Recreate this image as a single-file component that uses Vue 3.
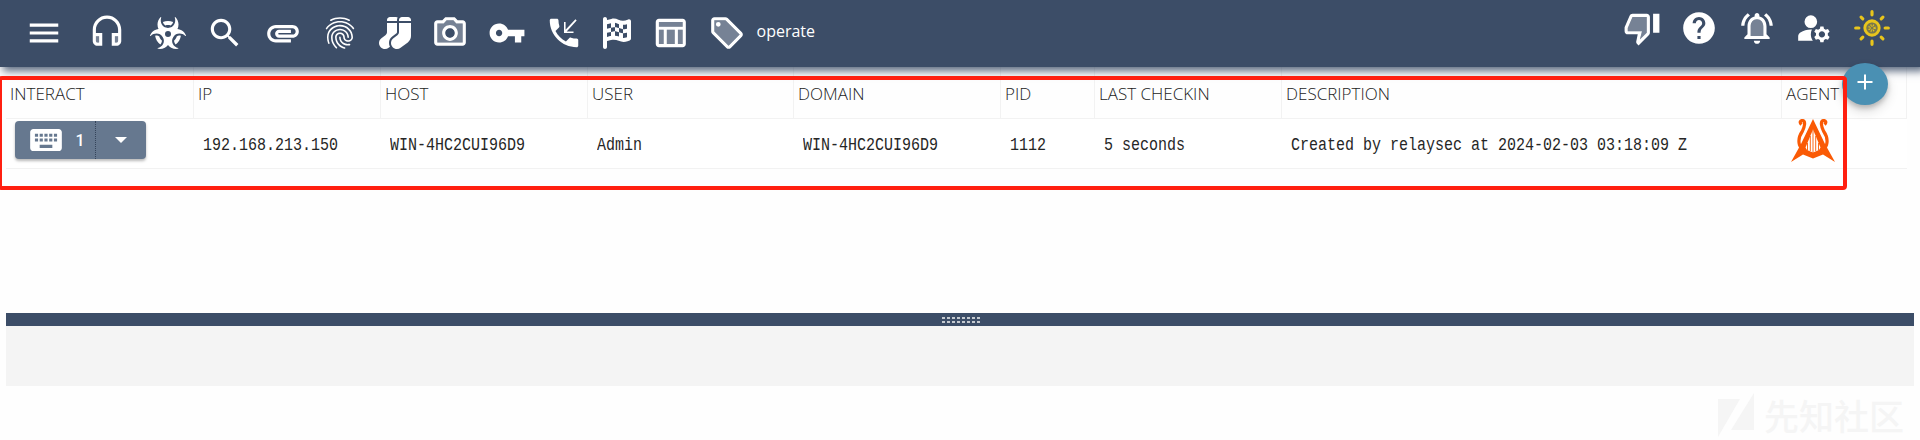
<script setup>
const tools = [
  { name: 'menu', path: 'M3 18h18v-2H3v2zm0-5h18v-2H3v2zm0-7v2h18V6H3z' },
  {
    name: 'headset',
    tone: 'M5 14h2v4H6c-.55 0-1-.45-1-1zm12 0h2v3c0 .55-.45 1-1 1h-1z',
    path: 'M12 1c-4.97 0-9 4.03-9 9v7c0 1.66 1.34 3 3 3h3v-8H5v-2c0-3.87 3.13-7 7-7s7 3.13 7 7v2h-4v8h3c1.66 0 3-1.34 3-3v-7c0-4.97-4.03-9-9-9zM7 14v4H6c-.55 0-1-.45-1-1v-3h2zm12 3c0 .55-.45 1-1 1h-1v-4h2v3z'
  },
  {
    name: 'biohazard',
    box: '-16 -48 608 608',
    path: 'M173.2 0c-1.8 0-3.5 .7-4.8 2C138.5 32.3 120 74 120 120c0 26.2 6 50.9 16.6 73c-22 2.4-43.8 9.1-64.2 20.5C37.9 232.8 13.3 262.4 .4 296c-.7 1.7-.5 3.7 .5 5.2c2.2 3.7 7.4 4.3 10.6 1.3C64.2 254.3 158 245.1 205 324s-8.1 153.1-77.6 173.2c-4.2 1.2-6.3 5.9-4.1 9.6c1 1.6 2.6 2.7 4.5 3c36.5 5.9 75.2 .1 109.7-19.2c20.4-11.4 37.4-26.5 50.5-43.8c13.1 17.3 30.1 32.4 50.5 43.8c34.5 19.3 73.3 25.2 109.7 19.2c1.9-.3 3.5-1.4 4.5-3c2.2-3.7 .1-8.4-4.1-9.6C379.1 477.1 324 403 371 324s140.7-69.8 193.5-21.4c3.2 2.9 8.4 2.3 10.6-1.3c1-1.6 1.1-3.5 .5-5.2c-12.9-33.6-37.5-63.2-72.1-82.5c-20.4-11.4-42.2-18.1-64.2-20.5C450 170.9 456 146.2 456 120c0-46-18.5-87.7-48.4-118c-1.3-1.3-3-2-4.8-2c-5 0-8.4 5.2-6.7 9.9C421.7 80.5 385.6 176 288 176S154.3 80.5 179.9 9.900c1.7-4.7-1.6-9.9-6.7-9.9zM240 272a48 48 0 1 1 96 0 48 48 0 1 1 -96 0zM181.7 417.6c6.3-11.8 9.8-25.1 8.6-39.8c-19.5-18-34-41.4-41.2-67.8c-12.5-8.1-26.2-11.8-40-12.4c-9-.4-18.1 .6-27.1 2.7c7.8 57.1 38.7 106.8 82.9 139.4c6.8-6.7 12.6-14.1 16.8-22.1zM288 64c-28.8 0-56.3 5.9-81.2 16.5c2 8.3 5 16.2 9 23.5c6.8 12.4 16.7 23.1 30.1 30.3c13.3-4.1 27.5-6.3 42.2-6.3s28.8 2.2 42.2 6.3c13.4-7.2 23.3-17.9 30.1-30.3c4-7.3 7-15.2 9-23.5C344.3 69.9 316.8 64 288 64zM426.9 310c-7.2 26.4-21.7 49.7-41.2 67.8c-1.2 14.7 2.2 28.1 8.6 39.8c4.3 8 10 15.4 16.8 22.1c44.3-32.6 75.2-82.3 82.9-139.4c-9-2.2-18.1-3.1-27.1-2.7c-13.8 .6-27.5 4.4-40 12.4z'
  },
  {
    name: 'search',
    path: 'M15.5 14h-.79l-.28-.27C15.41 12.59 16 11.11 16 9.5 16 5.91 13.09 3 9.5 3S3 5.91 3 9.5 5.91 16 9.5 16c1.61 0 3.09-.59 4.23-1.57l.27.28v.79l5 4.99L20.49 19l-4.99-5zm-6 0C7.01 14 5 11.99 5 9.5S7.01 5 9.5 5 14 7.01 14 9.5 11.99 14 9.5 14z'
  },
  {
    name: 'attachment',
    path: 'M2 12.5C2 9.46 4.46 7 7.5 7H18c2.21 0 4 1.79 4 4s-1.79 4-4 4H9.5C8.12 15 7 13.88 7 12.5S8.12 10 9.5 10H17v2H9.41c-.55 0-.55 1 0 1H18c1.1 0 2-.9 2-2s-.9-2-2-2H7.5C5.57 9 4 10.57 4 12.5S5.57 16 7.5 16H17v2H7.5C4.46 18 2 15.54 2 12.5z'
  },
  {
    name: 'fingerprint',
    path: 'M17.81 4.47c-.08 0-.16-.02-.23-.06C15.66 3.42 14 3 12.01 3c-1.98 0-3.86.47-5.57 1.41-.24.13-.54.04-.68-.2-.13-.24-.04-.55.2-.68C7.82 2.52 9.86 2 12.01 2c2.13 0 3.99.47 6.03 1.52.25.13.34.43.21.67-.09.18-.26.28-.44.28zM3.5 9.72c-.1 0-.2-.03-.29-.09-.23-.16-.28-.47-.12-.7.99-1.4 2.25-2.5 3.75-3.27C9.98 4.04 14 4.03 17.15 5.65c1.5.77 2.76 1.86 3.75 3.25.16.22.11.54-.12.7-.23.16-.54.11-.7-.12-.9-1.26-2.04-2.25-3.39-2.94-2.87-1.47-6.54-1.47-9.4.01-1.36.7-2.5 1.7-3.4 2.96-.08.14-.23.21-.39.21zm6.25 12.07c-.13 0-.26-.05-.35-.15-.87-.87-1.34-1.43-2.01-2.64-.69-1.23-1.05-2.73-1.05-4.34 0-2.97 2.54-5.39 5.66-5.39s5.66 2.42 5.66 5.39c0 .28-.22.5-.5.5s-.5-.22-.5-.5c0-2.42-2.09-4.39-4.66-4.39-2.57 0-4.66 1.97-4.66 4.39 0 1.44.32 2.77.93 3.85.64 1.15 1.08 1.64 1.85 2.42.19.2.19.51 0 .71-.11.1-.24.15-.37.15zm7.17-1.85c-1.19 0-2.24-.3-3.1-.89-1.49-1.01-2.38-2.65-2.38-4.39 0-.28.22-.5.5-.5s.5.22.5.5c0 1.41.72 2.74 1.94 3.56.71.48 1.54.71 2.54.71.24 0 .64-.03 1.04-.1.27-.05.53.13.58.41.05.27-.13.53-.41.58-.57.11-1.07.12-1.21.12zM14.91 22c-.04 0-.09-.01-.13-.02-1.59-.44-2.63-1.03-3.72-2.1-1.4-1.39-2.17-3.24-2.17-5.22 0-1.62 1.38-2.94 3.08-2.94 1.7 0 3.08 1.32 3.08 2.94 0 1.07.93 1.94 2.08 1.94s2.08-.87 2.08-1.94c0-3.77-3.25-6.83-7.25-6.83-2.84 0-5.44 1.58-6.61 4.03-.39.81-.59 1.76-.59 2.8 0 .78.07 2.01.67 3.61.1.26-.03.55-.29.64-.26.1-.55-.04-.64-.29-.49-1.31-.73-2.61-.73-3.96 0-1.2.23-2.29.68-3.24 1.33-2.79 4.28-4.6 7.51-4.6 4.55 0 8.25 3.51 8.25 7.83 0 1.62-1.38 2.94-3.08 2.94s-3.08-1.32-3.08-2.94c0-1.07-.93-1.94-2.08-1.94s-2.08.87-2.08 1.94c0 1.71.66 3.31 1.87 4.51.95.94 1.86 1.46 3.27 1.85.27.07.42.35.35.61-.05.23-.26.38-.47.38z'
  },
  {
    name: 'socks',
    box: '-48 -48 608 608',
    path: 'M175.2 476.6c-9.7-18-15.2-38.7-15.2-60.6c0-40.3 19-78.2 51.2-102.4l64-48c8.1-6 12.8-15.5 12.8-25.6V96H128V240c0 20.1-9.5 39.1-25.6 51.2l-64 48C14.2 357.3 0 385.8 0 416c0 53 43 96 96 96c20.8 0 41-6.7 57.6-19.2l21.6-16.2zM128 64H288V48c0-14.5 3.9-28.2 10.7-39.9C291 3 281.9 0 272 0H176c-26.5 0-48 21.5-48 48V64zM320 96V240c0 20.1-9.5 39.1-25.6 51.2l-64 48C206.2 357.3 192 385.8 192 416c0 53 43 96 96 96c20.8 0 41-6.7 57.6-19.2l115.2-86.4C493 382.2 512 344.3 512 304V96H320zM512 64V48c0-26.5-21.5-48-48-48H368c-26.5 0-48 21.5-48 48V64H512z'
  },
  {
    name: 'camera',
    tone: 'M20 6h-4.05l-1.83-2H9.88L8.05 6H4v12h16V6zm-8 11c-2.76 0-5-2.24-5-5s2.24-5 5-5 5 2.24 5 5-2.24 5-5 5z',
    path: 'M20 4h-3.17L15 2H9L7.17 4H4c-1.1 0-2 .9-2 2v12c0 1.1.9 2 2 2h16c1.1 0 2-.9 2-2V6c0-1.1-.9-2-2-2zm0 14H4V6h4.05l1.83-2h4.24l1.83 2H20v12zM12 7c-2.76 0-5 2.24-5 5s2.24 5 5 5 5-2.24 5-5-2.24-5-5-5zm0 8c-1.65 0-3-1.35-3-3s1.35-3 3-3 3 1.35 3 3-1.35 3-3 3z'
  },
  {
    name: 'key',
    path: 'M12.65 10C11.83 7.67 9.61 6 7 6c-3.31 0-6 2.69-6 6s2.69 6 6 6c2.61 0 4.83-1.67 5.65-4H17v4h4v-4h2v-4H12.65zM7 14c-1.1 0-2-.9-2-2s.9-2 2-2 2 .9 2 2-.9 2-2 2z'
  },
  {
    name: 'callback',
    path: 'M20 15.5c-1.25 0-2.45-.2-3.57-.57-.1-.03-.21-.05-.31-.05-.26 0-.51.1-.71.29l-2.2 2.2c-2.83-1.44-5.15-3.75-6.59-6.58l2.2-2.21c.28-.27.36-.66.25-1.01C8.7 6.45 8.5 5.25 8.5 4c0-.55-.45-1-1-1H4c-.55 0-1 .45-1 1 0 9.39 7.61 17 17 17 .55 0 1-.45 1-1v-3.5c0-.55-.45-1-1-1zM18 11h-4.3l6.3-6.9-.8-.8L13 10V5h-1v7h6z'
  },
  {
    name: 'flag',
    box: '-80 -48 608 608',
    path: 'M32 0C49.7 0 64 14.3 64 32V48l69-17.2c38.1-9.5 78.3-5.1 113.5 12.5c46.3 23.2 100.8 23.2 147.1 0l9.6-4.8C423.8 28.1 448 43.1 448 66.1V345.8c0 13.3-8.3 25.3-20.8 30l-34.7 13c-46.2 17.3-97.6 14.6-141.7-7.4c-37.9-19-81.3-23.7-122.5-13.4L64 384v96c0 17.7-14.3 32-32 32s-32-14.3-32-32V400 334 64 32C0 14.3 14.3 0 32 0zM64 187.1l64-13.9v65.5L64 252.6V318l48.8-12.2c5.1-1.3 10.1-2.4 15.2-3.3V238.7l38.9-8.4c8.3-1.8 16.7-2.5 25.1-2.1l0-64c13.6 .4 27.2 2.6 40.4 6.4l23.6 6.9v66.7l-41.7-12.3c-7.3-2.1-14.8-3.4-22.3-3.8v71.4c21.8 1.9 43.3 6.7 64 14.4V244.2l22.7 6.7c13.5 4 27.3 6.4 41.3 7.4V194c-7.8-.8-15.6-2.3-23.2-4.5l-40.8-12v-62c-13-3.8-25.8-8.8-38.2-15c-8.2-4.1-16.9-7-25.8-8.8v72.4c-13-.4-26 .8-38.7 3.6L128 173.2V98L64 114v73.1zM320 335.7c16.8 1.5 33.9-.7 50-6.8l14-5.2V251.9l-7.9 1.8c-18.4 4.3-37.3 5.7-56.1 4.5v77.4zm64-149.4V115.4c-20.9 6.1-42.4 9.1-64 9.1V194c13.9 1.4 28 .5 41.7-2.6l22.3-5.2z'
  },
  {
    name: 'table',
    tone: 'M5 5h15v3H5zm0 5h3v9H5zm5 0h5v9h-5zm7 0h3v9h-3z',
    path: 'M20 3H5c-1.1 0-2 .9-2 2v14c0 1.1.9 2 2 2h15c1.1 0 2-.9 2-2V5c0-1.1-.9-2-2-2zm0 2v3H5V5h15zm-5 14h-5v-9h5v9zM5 10h3v9H5v-9zm12 9v-9h3v9h-3z'
  },
  {
    name: 'tag',
    tone: 'M11 4H4v7l9 9.01L20 13l-9-9z',
    path: 'M21.41 11.58l-9-9C12.05 2.22 11.55 2 11 2H4c-1.1 0-2 .9-2 2v7c0 .55.22 1.05.59 1.42l9 9c.36.36.86.58 1.41.58s1.05-.22 1.41-.59l7-7c.37-.36.59-.86.59-1.41s-.23-1.06-.59-1.42zM13 20.01L4 11V4h7v-.01l9 9-7 7.02zM5 6.5a1.5 1.5 0 1 0 3 0a1.5 1.5 0 1 0 -3 0z'
  }
]

const actions = [
  {
    name: 'feedback',
    tone: 'M3 12v2h9l-1.34 5.34L15 15V5H6z',
    path: 'M15 3H6c-.83 0-1.54.5-1.84 1.22l-3.02 7.05c-.09.23-.14.47-.14.73v2c0 1.1.9 2 2 2h6.31l-.95 4.57-.03.32c0 .41.17.79.44 1.06L9.83 23l6.59-6.59c.36-.36.58-.86.58-1.41V5c0-1.1-.9-2-2-2zm0 12l-4.34 4.34L12 14H3v-2l3-7h9v10zm4-12h4v12h-4V3z'
  },
  {
    name: 'help',
    path: 'M12 2C6.48 2 2 6.48 2 12s4.48 10 10 10 10-4.48 10-10S17.52 2 12 2zm1 17h-2v-2h2v2zm2.07-7.75l-.9.92C13.45 12.9 13 13.5 13 15h-2v-.5c0-1.1.45-2.1 1.17-2.83l1.24-1.26c.37-.36.59-.86.59-1.41 0-1.1-.9-2-2-2s-2 .9-2 2H8c0-2.21 1.79-4 4-4s4 1.79 4 4c0 .88-.36 1.68-.93 2.25z'
  },
  {
    name: 'notifications',
    tone: 'M12 6.5c-2.49 0-4 2.02-4 4.5v6h8v-6c0-2.48-1.51-4.5-4-4.5z',
    path: 'M12 22c1.1 0 2-.9 2-2h-4c0 1.1.9 2 2 2zm6-6v-5c0-3.07-1.63-5.64-4.5-6.32V4c0-.83-.67-1.5-1.5-1.5s-1.5.67-1.5 1.5v.68C7.64 5.36 6 7.92 6 11v5l-2 2v1h16v-1l-2-2zm-2 1H8v-6c0-2.48 1.51-4.5 4-4.5s4 2.02 4 4.5v6zM7.58 4.08L6.15 2.65C3.75 4.48 2.17 7.3 2.03 10.5h2c.15-2.65 1.51-4.97 3.55-6.42zm12.39 6.42h2c-.15-3.2-1.73-6.02-4.12-7.85l-1.42 1.43c2.02 1.45 3.39 3.77 3.54 6.42z'
  },
  {
    name: 'account',
    path: 'M6 8a4 4 0 1 0 8 0a4 4 0 1 0 -8 0zM10.67 13.02c-.22-.01-.44-.02-.67-.02-2.42 0-4.68.67-6.61 1.82-.88.52-1.39 1.5-1.39 2.53V20h9.26c-.79-1.13-1.26-2.51-1.26-4 0-1.07.25-2.07.67-2.98zM20.75 16c0-.22-.03-.42-.06-.63l1.14-1.01-1-1.73-1.45.49c-.32-.27-.68-.48-1.08-.63L18 11h-2l-.3 1.49c-.4.15-.76.36-1.08.63l-1.45-.49-1 1.73 1.14 1.01c-.03.21-.06.41-.06.63s.03.42.06.63l-1.14 1.01 1 1.73 1.45-.49c.32.27.68.48 1.08.63L16 21h2l.3-1.49c.4-.15.76-.36 1.08-.63l1.45.49 1-1.73-1.14-1.01c.03-.21.06-.41.06-.63zM17 18c-1.1 0-2-.9-2-2s.9-2 2-2 2 .9 2 2-.9 2-2 2z'
  }
]

const columns = ['INTERACT', 'IP', 'HOST', 'USER', 'DOMAIN', 'PID', 'LAST CHECKIN', 'DESCRIPTION', 'AGENT']
const cells = ['192.168.213.150', 'WIN-4HC2CUI96D9', 'Admin', 'WIN-4HC2CUI96D9', '1112', '5 seconds', 'Created by relaysec at 2024-02-03 03:18:09 Z']
</script>

<template>
  <div class="page">
    <header class="bar">
      <nav class="tools">
        <svg v-for="t in tools" :key="t.name" class="icon" :viewBox="t.box || '0 0 24 24'">
          <path v-if="t.tone" :d="t.tone" opacity=".3" />
          <path :d="t.path" fill-rule="evenodd" />
        </svg>
      </nav>
      <span class="operation">operate</span>
      <div class="actions">
        <svg v-for="a in actions" :key="a.name" class="icon" viewBox="0 0 24 24">
          <path v-if="a.tone" :d="a.tone" opacity=".3" />
          <path :d="a.path" />
        </svg>
        <svg class="icon sun" viewBox="0 0 24 24">
          <circle cx="12" cy="12" r="3.6" opacity=".35" />
          <circle cx="12" cy="12" r="1.6" class="grain" />
          <circle cx="12" cy="12" r="4.5" class="ring" />
          <path class="rays" d="M12 1.700v2M12 20.3v2M1.700 12h2M20.3 12h2M5.100 5.100l1.1 1.1M17.8 17.8l1.1 1.1M5.100 18.900l1.1-1.1M17.8 6.200l1.1-1.1" />
        </svg>
      </div>
    </header>

    <main>
      <div class="grid head">
        <div v-for="c in columns" :key="c" class="th"><span>{{ c }}</span></div>
      </div>
      <div class="grid row">
        <div class="interact">
          <div class="split-button">
            <div class="main-part">
              <svg class="keyboard" viewBox="0 0 24 24">
                <path d="M20 5H4c-1.1 0-1.99.9-1.99 2L2 17c0 1.1.9 2 2 2h16c1.1 0 2-.9 2-2V7c0-1.1-.9-2-2-2zm-9 3h2v2h-2V8zm0 3h2v2h-2v-2zM8 8h2v2H8V8zm0 3h2v2H8v-2zm-1 2H5v-2h2v2zm0-3H5V8h2v2zm9 7H8v-2h8v2zm0-4h-2v-2h2v2zm0-3h-2V8h2v2zm3 3h-2v-2h2v2zm0-3h-2V8h2v2z" />
              </svg>
              <span>1</span>
            </div>
            <div class="drop-part">
              <svg viewBox="0 0 12 6"><path d="M0 0h12L6 6z" /></svg>
            </div>
          </div>
        </div>
        <div v-for="(c, i) in cells" :key="i" class="td"><span>{{ c }}</span></div>
        <div class="agent">
          <svg class="lyre" viewBox="0 0 44 43">
            <path class="horn" d="M10.500 5.500C8 3 9.500 1.500 11.500 1.500C15 2 13.500 8 11.500 12C8 17 7 21 8.500 26L12 33" />
            <path class="horn" d="M33.500 5.500C36 3 34.500 1.500 32.500 1.500C29 2 30.500 8 32.500 12C36 17 37 21 35.500 26L32 33" />
            <path d="M22 0L34 25L44 43L32 35.500L22 39.500L12 35.500L0 43L10 25z" />
            <path class="gap" d="M22 10.500L14.500 28.500L16 31L22 33.500L28 31L29.500 28.500z" />
            <path class="strings" d="M16.500 24v8M19.300 17v15M22 10v24M24.700 17v15M27.500 24v8" />
          </svg>
        </div>
      </div>
      <div class="splitter"><i v-for="n in 16" :key="n" /></div>
      <section class="tabs-area"></section>
    </main>

    <button class="fab" aria-label="Add"><svg viewBox="0 0 16 16"><path d="M8 .5v15M.5 8h15" /></svg></button>
    <div class="highlight"></div>

    <div class="watermark">
      <svg viewBox="0 0 36 44"><path d="M0 6h22L0 44zM36 0v37H13z" /></svg>
      <span>先知社区</span>
    </div>
  </div>
</template>

<style>
body {
  margin: 0;
  background: #fefefe;
}
</style>

<style scoped>
.page {
  position: relative;
  width: 1920px;
  height: 440px;
  overflow: hidden;
  background: #fefefe;
  font-family: "Open Sans", "Noto Sans", sans-serif;
}
.bar {
  position: relative;
  z-index: 1;
  display: flex;
  align-items: flex-start;
  box-sizing: border-box;
  height: 67px;
  padding: 0 29px 0 24.5px;
  background: #3c4d67;
  box-shadow: 4px 3px 8px 1px rgba(60, 77, 103, .85);
}
.icon {
  display: block;
  width: 38px;
  height: 38px;
  fill: #fff;
}
.tools {
  display: grid;
  grid-template-columns: 63.5px 61px 57px 57.5px 57.5px 54.5px 55px 57px 57.5px 52.5px 53px 57.5px 48.5px;
  padding-top: 13.5px;
}
.operation {
  padding-top: 19px;
  color: #fff;
  font-size: 16px;
  line-height: 24px;
}
.actions {
  display: flex;
  gap: 19.6px;
  margin-left: auto;
  padding-top: 9px;
}
.sun {
  fill: #e8c51c;
  stroke: #e8c51c;
}
.sun circle {
  stroke: none;
}
.sun .grain {
  fill: none;
  stroke: #e8c51c;
  stroke-width: 1.6;
  stroke-dasharray: .6 .7;
}
.sun .ring {
  fill: none;
  stroke: #e8c51c;
  stroke-width: 1.9;
}
.rays {
  stroke-width: 2;
  stroke-linecap: round;
}
main {
  padding: 0 6px;
}
.grid {
  display: grid;
  grid-template-columns: 188px 187px 207px 206px 207px 94px 187px 500px 125px;
  width: 1901px;
  box-sizing: border-box;
  border-bottom: 1px solid #f2f2f2;
}
.head {
  height: 52px;
}
.th {
  border-right: 1px solid #f2f2f2;
  padding: 15px 0 0 4px;
  color: #1c1c1c;
  font-size: 17px;
  font-weight: 300;
  line-height: 24px;
  white-space: nowrap;
}
.row {
  height: 50px;
  background: #fff;
}
.td {
  padding: 14px 0 0 9px;
  color: #262626;
  font-family: "Liberation Mono", monospace;
  font-size: 18px;
  line-height: 24px;
  white-space: pre;
}
.td span {
  display: inline-block;
  transform: scaleX(.8333);
  transform-origin: left;
}
.interact {
  padding: 2px 0 0 9px;
}
.split-button {
  display: flex;
  width: 131px;
  height: 38px;
  border-radius: 4px;
  background: #66788f;
  box-shadow: 0 2px 3px rgba(0, 0, 0, .28);
  color: #fff;
}
.main-part {
  display: flex;
  align-items: center;
  box-sizing: border-box;
  width: 81px;
  padding-left: 12px;
  border-right: 1px dotted #35445a;
  font-family: Roboto, sans-serif;
  font-size: 16px;
  font-weight: 500;
}
.keyboard {
  width: 38px;
  height: 38px;
  margin-right: 10.5px;
  fill: #fff;
}
.drop-part {
  display: flex;
  flex: 1;
  align-items: center;
  justify-content: center;
}
.drop-part svg {
  width: 12px;
  height: 6px;
  fill: #fff;
}
.agent {
  padding-left: 9px;
}
.lyre {
  display: block;
  width: 44px;
  height: 43px;
  fill: #fa5a05;
}
.lyre .horn {
  fill: none;
  stroke: #fa5a05;
  stroke-width: 3.2;
}
.lyre .gap {
  fill: #fff;
}
.lyre .strings {
  stroke: #fa6a1c;
  stroke-width: 1;
}
.splitter {
  display: grid;
  grid-template-columns: repeat(8, 3px);
  grid-auto-rows: 2px;
  gap: 2px;
  justify-content: center;
  align-content: center;
  height: 13px;
  padding-left: 2px;
  margin-top: 144px;
  background: #3c4d67;
}
.row + .splitter {
  margin-top: 144px;
}
.splitter i {
  background: #c5cad0;
}
.tabs-area {
  height: 60px;
  background: #f4f4f4;
}
.fab {
  position: absolute;
  left: 1842px;
  top: 63px;
  z-index: 2;
  display: flex;
  align-items: center;
  justify-content: center;
  width: 46px;
  height: 42px;
  padding: 0 0 4px;
  border: 0;
  border-radius: 50%;
  background: #4a90b3;
  box-shadow: 0 3px 5px rgba(0, 0, 0, .2), 0 6px 12px rgba(0, 0, 0, .14);
}
.fab svg {
  width: 16px;
  height: 16px;
  fill: none;
  stroke: #fff;
  stroke-width: 2;
}
.highlight {
  position: absolute;
  left: -2px;
  top: 76px;
  z-index: 3;
  box-sizing: border-box;
  width: 1849px;
  height: 114px;
  border: 4px solid #ff1f10;
  border-radius: 4px;
}
.watermark {
  position: absolute;
  left: 1718px;
  top: 393px;
  display: flex;
  align-items: center;
  gap: 10px;
  color: #f5f5f5;
  font-family: "Noto Sans CJK SC", sans-serif;
  font-size: 35px;
  font-weight: 500;
  line-height: 44px;
}
.watermark svg {
  width: 36px;
  height: 44px;
  fill: #f5f5f5;
}
</style>
